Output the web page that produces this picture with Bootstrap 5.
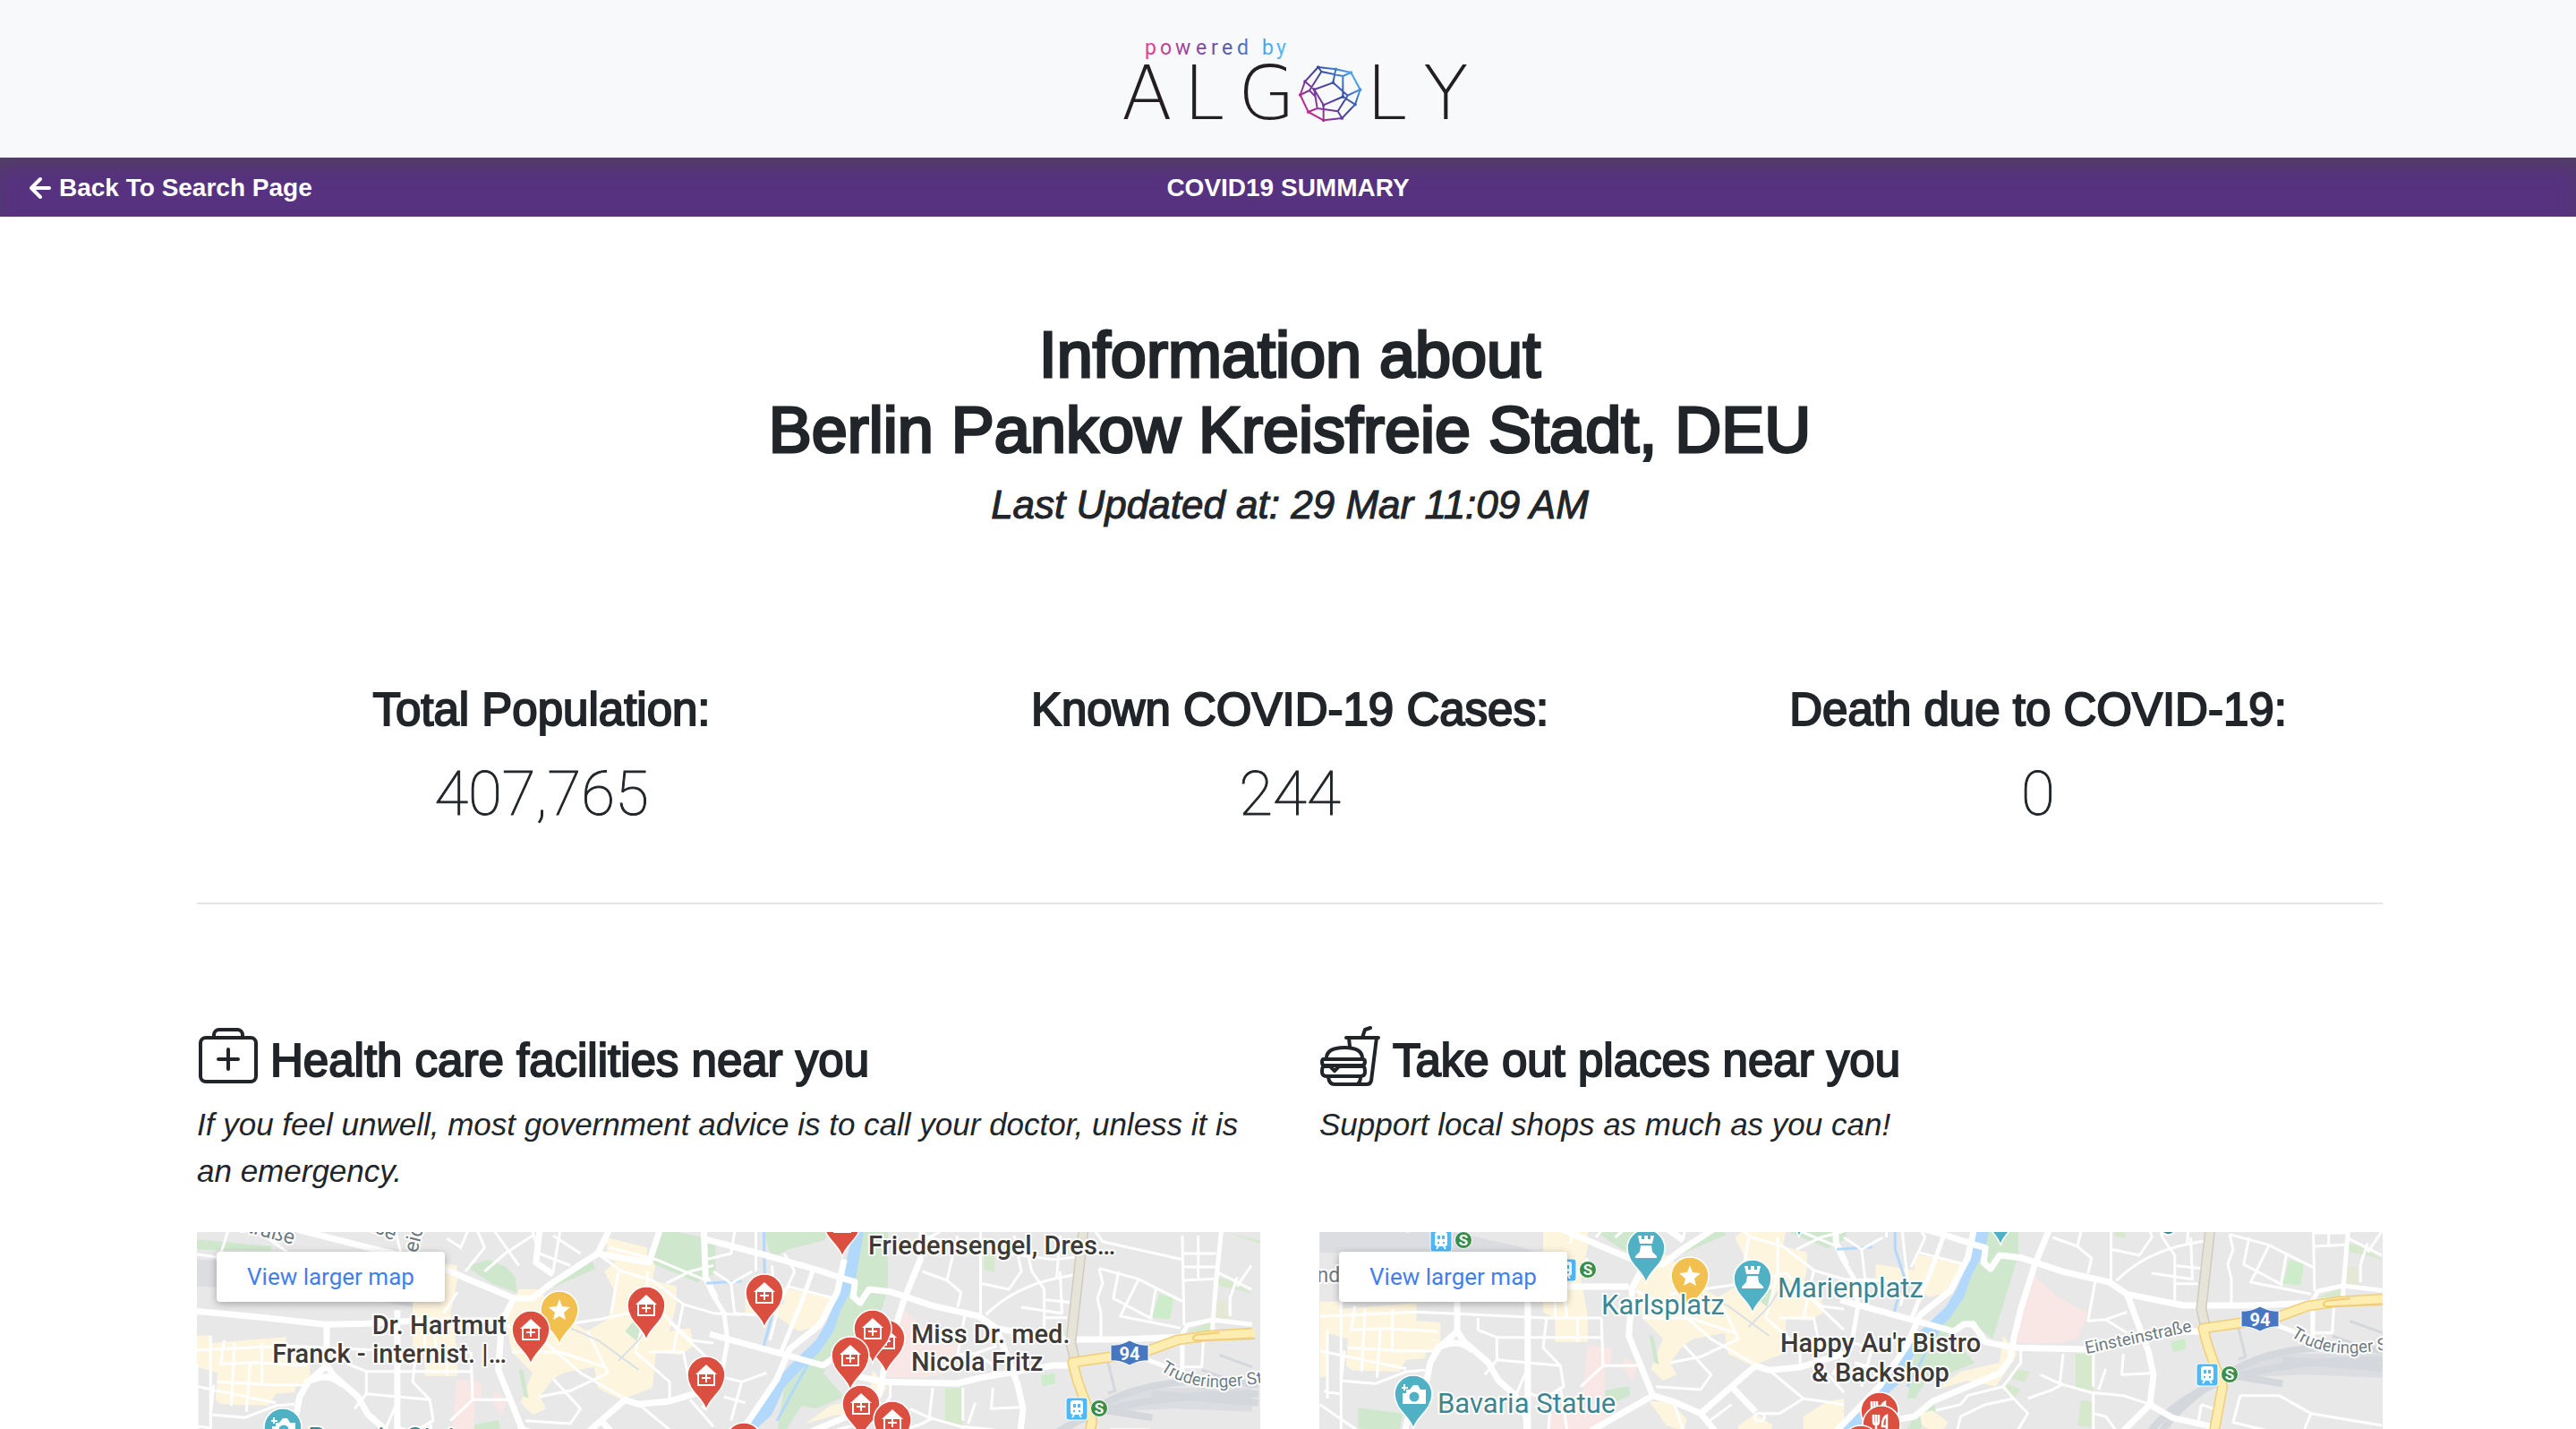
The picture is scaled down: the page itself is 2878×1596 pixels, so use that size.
<!DOCTYPE html>
<html lang="en">
<head>
<meta charset="utf-8">
<meta name="viewport" content="width=device-width, initial-scale=1">
<title>COVID19 Summary</title>
<link href="https://cdn.jsdelivr.net/npm/bootstrap@5.3.0/dist/css/bootstrap.min.css" rel="stylesheet">
<style>
  body { font-family: "Liberation Sans", Arial, sans-serif; color: #212529; }
  .brand-head { background: #f8f9fb; padding: 20px 0; }
  .brand-logo { width: 420px; height: 136px; }
  .title-bar { background: #573280; box-shadow: inset 0 14px 24px -8px #4f4459; height: 66px; padding: 2px 32px 0; font-size: 28px; line-height: 36px; font-weight: 700; }
  .title-bar a { gap: 8px; }
  .page-body { padding: 112px 216px 0 220px; }
  .page-body .row { --bs-gutter-x: 66px; }
  .medium { font-weight: 400; -webkit-text-stroke: 2px currentColor; paint-order: stroke fill; }
  .place-title { font-size: 72px; line-height: 84px; margin: 0 0 17px; -webkit-text-stroke-width: 3px; }
  .updated { font-size: 44px; line-height: 50px; margin: 0 0 174px; font-style: italic; -webkit-text-stroke-width: 1px; }
  .stat-name { font-size: 51px; line-height: 60px; margin: 0 0 23px; }
  .stat-value { font-family: Roboto, sans-serif; font-weight: 100; font-size: 69px; line-height: 82px; margin: 0; -webkit-text-stroke: 1px currentColor; }
  .divider { height: 2px; border: 0; background: #e4e4e4; opacity: 1; margin: 80px 0 135px; }
  .section-name { font-size: 51px; line-height: 60px; gap: 12px; margin: 0 0 15px; }
  .section-name svg { width: 70px; height: 70px; -webkit-text-stroke: 0; }
  .advice { font-size: 35px; line-height: 52px; font-style: italic; margin: 0 0 42px; }
  .map-box { height: 222px; overflow: hidden; background: #e8e8e8; }
  .map-box svg { width: 100%; height: 100%; display: block; font-family: Roboto, sans-serif; }
  .map-link { left: 22px; top: 22px; height: 56px; padding: 0 34px; background: #fff; border-radius: 4px; box-shadow: 0 2px 8px rgba(0,0,0,.3); font-family: Roboto, sans-serif; font-size: 26px; color: #427fed; }
  .way path { fill: none; vector-effect: non-scaling-stroke; stroke-linejoin: round; }
  .small-way { stroke: #fff; stroke-width: 3; }
  .big-way { stroke: #fff; stroke-width: 7; }
  .halo { paint-order: stroke; stroke: #fff; stroke-width: 4; stroke-linejoin: round; }
  .place { fill: #3e3a38; font-size: 29px; font-weight: 500; }
  .sight { fill: #3b8690; font-size: 31px; }
  .street { fill: #6d7a84; font-size: 19px; }
  .street.large { font-size: 23px; }
</style>
<script src="https://cdn.jsdelivr.net/npm/bootstrap@5.3.0/dist/js/bootstrap.bundle.min.js"></script>
</head>
<body class="vh-100 overflow-hidden bg-white">

<header class="brand-head d-flex justify-content-center">
  <svg class="brand-logo" viewBox="0 0 420 136" role="img" aria-label="powered by Algoly">
    <defs>
      <linearGradient id="tagTone" gradientUnits="userSpaceOnUse" x1="50" y1="0" x2="208" y2="0"><stop offset="0" stop-color="#e83e93"/><stop offset=".35" stop-color="#8a479f"/><stop offset=".65" stop-color="#4f5fae"/><stop offset=".85" stop-color="#4fa3e3"/><stop offset="1" stop-color="#58b8f4"/></linearGradient>
      <linearGradient id="gemTone" gradientUnits="userSpaceOnUse" x1="690" y1="320" x2="850" y2="190"><stop offset="0" stop-color="#cf2a8c"/><stop offset=".3" stop-color="#7a3a9c"/><stop offset=".6" stop-color="#3a46a0"/><stop offset="1" stop-color="#48a8ec"/></linearGradient>
    </defs>
    <text y="41" x="50 67 84 107 124 136 153 170 181 197" font-family="Roboto, sans-serif" font-size="23" fill="url(#tagTone)">powered by</text>
    <g font-family="'DejaVu Sans Light', 'DejaVu Sans', sans-serif" font-weight="200" font-size="83" fill="#231f20">
      <text y="113" x="24 93 154">ALG</text>
      <text y="113" x="297 361">LY</text>
    </g>
    <g transform="scale(.33333)" fill="none" stroke="url(#gemTone)" stroke-width="6" stroke-linecap="round" stroke-linejoin="round">
      <path d="M731 165 790 172 841 183 872 240 855 290 811 336 749 343 698 315 671 258 687 213Z"/>
      <path d="M731 165 742 180 814 195 841 183M742 180 702 243M814 195V264L855 290M790 172 781 217 718 240 749 292 814 264M781 217 830 260 872 240M718 240 687 213M718 240 728 303M702 243 671 258M702 243 720 262M728 303 698 315M728 303 797 313 811 336M797 313 830 260M749 292V343"/>
      <path stroke-width="11" d="M731 165h0M790 172h0M841 183h0M872 240h0M855 290h0M811 336h0M749 343h0M698 315h0M671 258h0M687 213h0M781 217h0M718 240h0M749 292h0M814 264h0"/>
    </g>
  </svg>
</header>

<nav class="title-bar position-relative d-flex align-items-center justify-content-center text-white">
  <a href="#" class="position-absolute start-0 ms-4 ps-2 d-flex align-items-center text-white text-decoration-none">
    <svg width="26" height="26" viewBox="0 0 26 26" fill="none" stroke="#fff" stroke-width="4" stroke-linecap="round" stroke-linejoin="round" aria-hidden="true"><path d="M13 3 3 13l10 10M3 13h20"/></svg>
    <span>Back To Search Page</span>
  </a>
  <span>COVID19 SUMMARY</span>
</nav>

<main class="page-body container-fluid">
  <div class="text-center">
    <h1 class="place-title medium">Information about<br>Berlin Pankow Kreisfreie Stadt, DEU</h1>
    <p class="updated medium">Last Updated at: 29 Mar 11:09 AM</p>
  </div>

  <section class="row text-center">
    <div class="col-4"><h2 class="stat-name medium">Total Population:</h2><p class="stat-value">407,765</p></div>
    <div class="col-4"><h2 class="stat-name medium">Known COVID-19 Cases:</h2><p class="stat-value">244</p></div>
    <div class="col-4"><h2 class="stat-name medium">Death due to COVID-19:</h2><p class="stat-value">0</p></div>
  </section>

  <hr class="divider">

  <section class="row">
    <div class="col-6 d-flex flex-column">
      <h2 class="section-name medium d-flex align-items-end">
        <svg viewBox="0 0 70 70" fill="none" stroke="#212529" stroke-width="4" stroke-linecap="round" aria-hidden="true"><rect x="4" y="14" width="62" height="49" rx="6"/><path d="M19 14v-3a6 6 0 0 1 6-6h20a6 6 0 0 1 6 6v3M35 27v22M24 38h22"/></svg>
        <span>Health care facilities near you</span>
      </h2>
      <p class="advice">If you feel unwell, most government advice is to call your doctor, unless it is an emergency.</p>
      <div class="map-box position-relative mt-auto">
        <svg viewBox="0 0 1188 222" preserveAspectRatio="xMinYMin slice" role="img" aria-label="Map of health care facilities">
          <defs>
            <path id="pinShape" d="M0 0C-3-14-21-21-21-39A21 21 0 1 1 21-39C21-21 3-14 0 0Z" stroke="#fff" stroke-width="1.5"/>
            <g id="clinicPin"><use href="#pinShape" fill="#da4f40"/><path d="M-12-40 0-51 12-40Z" fill="#fff"/><path d="M-9-41V-28H9V-41M0-40v9M-5-36H5" fill="none" stroke="#fff" stroke-width="2"/></g>
            <g id="foodPin"><use href="#pinShape" fill="#da4f40"/><path d="M-9-50v8q0 3 3 3v12M-6-50v10M-3-50v8q0 3-3 3M6-27V-49q-5 2-5 12H6" fill="#fff0" stroke="#fff" stroke-width="2.5"/></g>
            <g id="starPin"><use href="#pinShape" fill="#f2c04e"/><path d="M0-51 3-43 12-42 5-36 7-28 0-32-7-28-5-36-12-42-3-43Z" fill="#fff"/></g>
            <g id="towerPin"><use href="#pinShape" fill="#51b1c4"/><path d="M-9-53h4v4h3v-4h4v4h3v-4h4l-2 9H-7ZM-6-42H6L7-35H-7ZM-7-35H7L12-30v2H-12v-2Z" fill="#fff"/></g>
            <g id="photoPin"><use href="#pinShape" fill="#51b1c4"/><path d="M-4-44 0-49H5L8-44H14V-28H-12V-40H-8V-44Z" fill="#fff"/><circle cx="1" cy="-36" r="5.500" fill="#51b1c4"/><path d="M-10-50v7M-13-46h7" stroke="#fff" stroke-width="2"/></g>
            <g id="trainStop"><rect x="-12" y="-12" width="24" height="25" rx="3" fill="#4fb8f7" stroke="#fff"/><rect x="-7" y="-9" width="14" height="16" rx="3" fill="#fff"/><path d="M-4-5h3v4h-3zM1-5h3v4H1zM-4 2h2v2h-2zM2 2h2v2H2z" fill="#4fb8f7"/><path d="M-5 10l2-3M5 10 3 7" stroke="#fff" stroke-width="2"/><circle cx="25" r="9.500" fill="#388e4a" stroke="#fff"/><text x="25" y="6" text-anchor="middle" font-size="17" font-weight="700" fill="#fff">S</text></g>
            <!-- City ground shared by both maps: west half, then east half -->
            <g id="cityBase">
              <g class="way" transform="translate(-23 24) scale(.3827 .33333)">
                <path style="fill:#dcdde0" d="M38 20 380 30 620 90 690 120 690 180 400 120 38 110Z"/>
                <g fill="#fef5de">
                  <path style="fill:inherit" d="M38 275H100V300L320 280V340L390 345V440L350 435 345 465 290 470 270 510 130 505 115 490 120 400 60 380V525L38 530Z"/>
                  <path style="fill:inherit" d="M690 10 820 40V90L800 200 820 320V410H725V330L690 310Z"/>
                  <path style="fill:inherit" d="M1000 120 1060 120 1110 200 1200 260 1260 220 1280 130 1250 60 1290 20 1400 30 1390 90 1460 110 1460 170 1440 260 1500 250 1510 310 1470 340 1400 330 1390 450 1300 490 1230 450 1220 380 1130 400 1100 420 1060 480 1080 520 1040 540 1005 500 1040 400 980 330 960 220Z"/>
                  <path style="fill:inherit" d="M1254-54 1374-20V50L1260 20ZM1000 610H1060L1110 670 1100 708 1050 690ZM1260 690 1310 650 1360 690 1350 720H1260ZM1450 660 1520 610 1568 600V720H1450Z"/>
                </g>
                <g fill="#cfe7cd">
                  <path style="fill:inherit" d="M38-50 279-24 274-9 38-14ZM844 41 914 21 964 46 990 80 994 131 920 100ZM1084 101 1214 26 1224 51 1104 111ZM1400-60 1434-80 1574-44V66L1520 96 1395 36ZM1000 388 1012 390 1028 485 1015 480ZM860 575 940 558 945 590 880 620ZM150 630 280 650 270 708 150 700ZM1310 260 1340 220 1360 240 1345 295Z"/>
                </g>
                <path style="fill:#f9e7e5" d="M820 420 890 430V490L870 500V600L805 590ZM925 460 965 490 950 540 925 500ZM705 640 860 620 890 650 830 708H705Z"/>
                <path class="small-way" d="M100 275V708M38 440 290 500M60 370V600M38 325 320 310 700 330H860M140 290 130 370 230 365 380 375M170 300 160 510M250 300V440H390M120 430 290 440M205 530 215 370M110 440 100 540 200 550 290 510 345 505M50 575 100 585M38 620 150 708M500 330V370L555 395H860M555 395V470L520 520M555 470 740 490 750 560 690 600 645 580M700 330 690 430 740 490M610 590 640 510M725 250V330M860 330 865 490H980M865 490 800 560M710 640 705 708M740 560 760 708M780 0 770 80M820 130 780 200M900 60 960 0 1040-60M844 60 900-20 880-73M1040-73 1060 0 1150 40M1100-60 1180 0M750 240 760 330M790 330V410"/>
                <path class="small-way" d="M960 240 1080 300 1180 400 1300 480M980 330H1120L1250 380M1060 250 1240 220 1400 180M1230 0 1300 60 1390 90 1480 170 1568 200M1375 60V180L1340 330 1440 430V495M1200 260 1260 400 1150 460 1060 480M1100 420 1180 520 1150 570 1020 560M1400 180 1500 290 1568 300M1380 330H1480L1500 440M1264-20 1400 20 1568 100M1070 610 1100 708M1170 680 1240 620M1350 505 1450 600 1568 620M1450 600 1380 650 1320 650M1500 490 1568 580M40 0 300 40M150-73 130 0M240-73 330 0 500 30M640-73 660 20M930-73 1000 40M850-73 830-20 790-50M1120-73 1100 60M1430 100 1500 60 1568 40M1290 60 1270 200M1440 230 1568 370M1480 170 1450 330"/>
                <path class="big-way" d="M354-80 560-20 740 30 860 90 985 150H1040L1090 105 1230 0 1264-80M30 190 260 215 435 238 560 235 700 225 940 225M439 238V375L385 430 360 480 350 540 300 640 285 720M439 375 460 410 530 480 560 540 610 590 640 660 643 720M375 435Q440 390 485 440M645 190V720"/>
                <path class="big-way" d="M985 150 950 230 940 390 1010 590 1070 610 1150 650 1200 720M1010 590 830 708M1150 650 1240 560 1310 490 1350 505 1440 495 1568 450M1240 560 1310 645M1230 0 1380 30 1410-73M1060-73 1050 30 1100 70M1540-80 1545 80 1575 150"/>
                <circle cx="1322" cy="662" r="14" fill="none" stroke="#fff" stroke-width="8"/>
                <path style="stroke:#dbe0e4;stroke-width:2" d="M1110 230 1230 290 1350 390M1290 360 1350 290 1400 200"/>
              </g>
              <g class="way" transform="translate(577 24) scale(.3954 .33333)">
                <path style="fill:#cfe7cd" d="M425-73H493V120L470 210 420 400 370 350 340 345 310 400 370 480 290 520 250 510 200 600 180 600 200 450 300 330 340 260 360 190ZM143-73H323L313-44 213-14 163 16ZM250 600 200 660 175 708H210L260 640Z"/>
                <path style="fill:#d6e9cd" d="M655 450H705V575L655 560ZM670 605 700 610V698L660 690ZM763-4H795V62L765 55ZM1340 260 1400 230 1420 240 1400 262ZM480 500 525 510 510 545 470 530ZM460 550 500 570 480 600 455 580ZM1453-69 1545-44V-32ZM1425 80 1460 90 1530 140 1480 120 1430 110Z"/>
                <path style="fill:#cdecc9" d="M925 410 965 400V435L930 445ZM1260 135 1300 150 1290 220 1240 215Z"/>
                <path style="fill:#e6e8d6" d="M1420 155 1450 160 1460 230 1420 220Z"/>
                <path style="fill:#f9e7e5" d="M540 190 600 255 650 290 690 310 660 400 600 415H490L500 330Z"/>
                <path style="fill:#fef5de" d="M200 115 330 150 310 240 240 260 180 210H90V150L200 170ZM450 390 490 450 430 560 350 540 260 570 330 510 440 480ZM215 650 250 640 295 680 270 720 220 690Z"/>
                <path style="fill:#b2d9fb" d="M395-73H425L400 100 360 190 340 260 300 330 240 400 200 450 165 540 110 600 50 720H-30L0 690 70 620 110 540 150 460 220 370 290 290 320 230 355 130Z"/>
                <path style="stroke:#b2d9fb;stroke-width:3" d="M143-73 145 100 170 190 140 320M-20 100 80 92M320 260 230 450 180 560"/>
                <path style="fill:#dcdde0" d="M1090 500 1220 450 1522 450V530L1300 520 1120 530Z"/>
                <path style="stroke:#d4d7dc;stroke-width:8" d="M860 720Q940 590 1100 530T1540 470M900 708Q960 600 1110 500T1540 440M1080 520 1240 550M1240 470 1540 500"/>
                <path style="stroke:#d4d7dc;stroke-width:3" d="M1110 340 1135 460 1115 468M1430 340 1522 380M1380 390 1500 440"/>
                <path class="small-way" d="M755-73V210M590 60 660 90 700 130 690 180M660 90 690-60M590-60 720-20 755 0M755 100 835 120 870 60 850-60M770 205Q850 110 980 80L1030 70M835 0 960 20 1040 10M880-40 900 60 935 120V280M980 60 985 200 870 180M980-60 970 80M940 155 1020 165M935 215H1000M1090 50 1100 100 1085 150 1095 200V285M1090 50 1200 85 1325 160M1145 60 1130 150 1240 220M1200 90 1150 210 1320 250M1250 120 1235 220M1325-60 1330 240M1330 0H1420M1330 45H1420M1330 90 1415 85M1370-60V90M1420 60 1520 120M1480 80 1460 150V210M1520 40 1480 110M710 210 690 340 740 335 800 380M740 335 800 310M705 450V560M1080-73 1100-40 1325 20M560-20 640-73"/>
                <path class="small-way" d="M500 440V480L450 560 480 600M450 560 350 590 330 620 260 640M480 600 400 620 330 660 320 708M480 600 520 650 490 708M555 520 610 550 700 580 790 590 865 620M610 550 620 450M790 450 785 520 870 515M520 600 590 570 620 550M705 580V708M705 650 740 660 770 708M720 570 740 500M1325 280V420M1325 380H1380L1385 280M1120 590 1100 680 1200 708M1120 590H1230L1320 650 1520 690M1320 650 1300 708M1010 620 1000 690M1010 620 1060 640M60-73 50 0-20 20M120 60V-73M165 40 180 200 160 290M50 100 60 200 160 210M0 200 80 205M230 60 190 160M210 110 340 150M0 60 50 100 110 60M-20 400 80 430 50 560M80 430 150 400M200 0 230 60M30 480 90 500"/>
                <path class="big-way" d="M-30-50 130 0 283 51 373 86 400 95 395 145 415 165 440 120 500 128 620 175 750 210 800 250 960 288H1150L1320 280M590-73 585 20 540 150 500 300 480 400 470 470 440 515 250 610 200 660 150 670"/>
                <path class="big-way" d="M-10 270 50 290 190 335 310 375 340 350H365L400 410 480 430 690 435 760 415 960 375H1010M370 20 350 130 300 240 215 320 180 420 100 560-20 708M800 250 860 440 875 520 865 620 780 720M865 620 930 665 1045 695"/>
                <path style="stroke:#fff;stroke-width:5" d="M1325 430V270L1340 240 1410 222 1522 238M1410 260 1412 222 1420 100 1435-73M-10 120 30 200 40 290 20 430-30 520M283 51 250 160 190 335M1225 355 1325 400"/>
                <path style="stroke:#cfcbbf;stroke-width:12" d="M1045-73 1010 300 1020 350"/><path style="stroke:#e6e3d8;stroke-width:9" d="M1045-73 1010 300 1020 350"/>
                <path style="stroke:#f1cd78;stroke-width:12" d="M1522 266 1400 275 1310 290 1230 325 1130 345 1015 365 1030 430 1070 560 1045 720"/>
                <path style="stroke:#fdedb1;stroke-width:9" d="M1530 266 1400 275 1310 290 1230 325 1130 345 1015 365 1030 430 1070 560 1045 720"/>
                <path style="stroke:#f1cd78;stroke-width:2" d="M1530 285 1365 292Q1345 285 1365 272L1430 265"/>
              </g>
              <path id="truder" d="M1076 154Q1108 176 1150 173T1260 158" fill="none"/>
              <text class="street halo"><textPath href="#truder">Truderinger Straße</textPath></text>
              <path d="M1021 126Q1031 127 1042 121 1053 127 1063 126V144Q1053 143 1042 149 1031 143 1021 144Z" fill="#4677c0" stroke="#fff" stroke-width="1"/>
              <text x="1042" y="143" text-anchor="middle" font-size="20" font-weight="700" fill="#fff">94</text>
              <use href="#trainStop" x="983" y="197"/>
            </g>
          </defs>
          <use href="#cityBase"/>
          <g class="street large halo"><text transform="translate(44 -3) rotate(15)">straße</text><text transform="translate(184 -6) rotate(24)">aße</text><text transform="translate(246 24) rotate(-76)">eidlstr</text></g>
          <use href="#starPin" x="405" y="126"/><use href="#clinicPin" x="373" y="148"/><use href="#clinicPin" x="502" y="121"/><use href="#clinicPin" x="569" y="199"/>
          <use href="#clinicPin" x="721" y="28"/><use href="#clinicPin" x="634" y="107"/><use href="#clinicPin" x="770" y="158"/><use href="#clinicPin" x="755" y="147"/><use href="#clinicPin" x="730" y="177"/>
          <use href="#clinicPin" x="742" y="231"/><use href="#clinicPin" x="777" y="249"/><use href="#clinicPin" x="611" y="273"/><use href="#photoPin" x="96" y="257"/>
          <g class="place halo"><text x="750" y="25">Friedensengel, Dres…</text><text x="346" y="114" text-anchor="end">Dr. Hartmut</text><text x="346" y="146" text-anchor="end">Franck - internist. |…</text><text x="798" y="124">Miss Dr. med.</text><text x="798" y="155">Nicola Fritz</text></g>
          <text class="sight halo" x="124" y="240">Bavaria Statue</text>
        </svg>
        <a href="#" class="map-link position-absolute d-flex align-items-center text-decoration-none">View larger map</a>
      </div>
    </div>

    <div class="col-6 d-flex flex-column">
      <h2 class="section-name medium d-flex align-items-end">
        <svg viewBox="0 0 70 70" fill="none" stroke="#212529" stroke-width="4" stroke-linecap="round" stroke-linejoin="round" aria-hidden="true"><path d="M30 14H66M48 14 51 5 57 3M33 14 34 24M64 14 58 62Q57 66 53 66H17Q11 66 10 58M42 66Q46 64 46 58"/><path d="M8 37Q8 25 28 25T48 37M6 38H48Q51 38 51 41T48 45H6Q3 45 3 41T6 38ZM5 45Q3 47 3 52T8 57H46Q51 57 51 52T49 45M6 46H12L17 51 22 46H48"/></svg>
        <span>Take out places near you</span>
      </h2>
      <p class="advice">Support local shops as much as you can!</p>
      <div class="map-box position-relative mt-auto">
        <svg viewBox="0 0 1188 222" preserveAspectRatio="xMinYMin slice" role="img" aria-label="Map of take out places">
          <use href="#cityBase" x="9" y="-38"/>
          <use href="#trainStop" x="136" y="9"/><use href="#trainStop" x="275" y="42"/>
          <text class="street large halo" x="-15" y="56">and</text>
          <text class="street halo" transform="translate(857 136) rotate(-12)">Einsteinstraße</text>
          <text class="sight halo" x="940" y="-4">g</text>
          <use href="#towerPin" x="365" y="57"/><use href="#starPin" x="414" y="88"/><use href="#towerPin" x="484" y="91"/><use href="#towerPin" x="761" y="15"/><use href="#towerPin" x="536" y="6"/><use href="#photoPin" x="105" y="220"/>
          <use href="#foodPin" x="626" y="239"/><use href="#foodPin" x="628" y="254"/><use href="#foodPin" x="605" y="276"/><use href="#foodPin" x="669" y="281"/>
          <g class="sight halo"><text x="315" y="92">Karlsplatz</text><text x="512" y="73">Marienplatz</text><text x="132" y="202">Bavaria Statue</text></g>
          <g class="place halo" text-anchor="middle"><text x="627" y="134">Happy Au'r Bistro</text><text x="627" y="167">&amp; Backshop</text></g>
        </svg>
        <a href="#" class="map-link position-absolute d-flex align-items-center text-decoration-none">View larger map</a>
      </div>
    </div>
  </section>
</main>
</body>
</html>
